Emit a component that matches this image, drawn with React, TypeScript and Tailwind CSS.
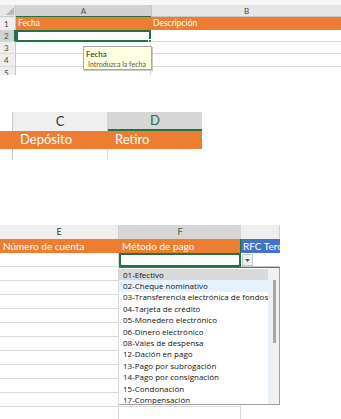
const items = [
  "01-Efectivo",
  "02-Cheque nominativo",
  "03-Transferencia electrónica de fondos",
  "04-Tarjeta de crédito",
  "05-Monedero electrónico",
  "06-Dinero electrónico",
  "08-Vales de despensa",
  "12-Dación en pago",
  "13-Pago por subrogación",
  "14-Pago por consignación",
  "15-Condonación",
  "17-Compensación",
];

function Row1({ n, h, sel }: { n: string; h: string; sel?: boolean }) {
  return (
    <div className={`${h} flex shrink-0`}>
      <div
        className={`w-[16px] shrink-0 flex items-center pl-[4px] text-[8px] border-b border-[#dadada] ${
          sel ? "bg-[#d2d2d2] text-[#217346] border-r-2 border-r-[#217346]" : "bg-[#eeeeee] text-[#444] border-r border-r-[#c8c8c8]"
        }`}
      >
        {n}
      </div>
      {sel ? (
        <div className="w-[135px] shrink-0 border-2 border-[#217346] relative">
          <div className="absolute right-[-3px] bottom-[-3px] w-[4px] h-[4px] bg-[#217346] border border-white" />
        </div>
      ) : (
        <div className="w-[135px] shrink-0 border-b border-r border-[#dadada]" />
      )}
      <div className="flex-1 border-b border-[#dadada]" />
    </div>
  );
}

export default function App() {
  return (
    <div className="w-[341px] h-[419px] bg-white overflow-hidden flex flex-col font-['Lato',sans-serif]">
      {/* Section 1 */}
      <div className="h-[75px] shrink-0 relative flex flex-col overflow-hidden">
        <div className="h-[5px] shrink-0 bg-[#f7f7f7]" />
        <div className="h-[12px] shrink-0 flex text-[8px] text-[#444]">
          <div className="w-[16px] shrink-0 bg-[#e6e6e6] border-r border-b border-[#c8c8c8] relative">
            <svg className="absolute right-[1px] bottom-[1px]" width="8" height="8" viewBox="0 0 8 8">
              <polygon points="8,0 8,8 0,8" fill="#b8b8b8" />
            </svg>
          </div>
          <div className="w-[135px] shrink-0 bg-[#d2d2d2] border-b border-[#217346] flex items-center justify-center text-[#3a5a48]">
            A
          </div>
          <div className="flex-1 bg-[#e6e6e6] border-b border-l border-[#c8c8c8] flex items-center justify-center">B</div>
        </div>
        <div className="h-[13px] shrink-0 flex">
          <div className="w-[16px] shrink-0 bg-[#eeeeee] border-r border-[#c8c8c8] flex items-center pl-[4px] text-[8px] text-[#444]">
            1
          </div>
          <div className="w-[135px] shrink-0 bg-[#ed7d31] text-white text-[8.5px] flex items-center pl-[2px]">Fecha</div>
          <div className="flex-1 bg-[#ed7d31] text-white text-[8.5px] flex items-center pl-[2px]">Descripción</div>
        </div>
        <Row1 n="2" h="h-[12px]" sel />
        <Row1 n="3" h="h-[12px]" />
        <Row1 n="4" h="h-[13px]" />
        <Row1 n="5" h="h-[13px]" />
        <div className="absolute left-[83px] top-[46px] w-[69px] h-[24px] bg-[#ffffe1] border border-[#a8a8a8] shadow-[1px_1px_0_#c8c8c8] flex flex-col pl-[2px] pt-[2px] leading-[10px]">
          <div className="text-[8px] text-[#222]">Fecha</div>
          <div className="text-[7px] text-[#555] pl-[2px]">Introduzca la fecha</div>
        </div>
      </div>

      {/* Section 2 */}
      <div className="h-[48px] mt-[37px] shrink-0 flex flex-col">
        <div className="h-[19px] shrink-0 flex">
          <div className="w-[13px] shrink-0 border-r border-[#c8c8c8]" />
          <div className="w-[95px] shrink-0 bg-[#efefef] border-r border-[#d0d0d0] flex items-center justify-center text-[13px] text-[#333]">
            C
          </div>
          <div className="w-[94px] shrink-0 bg-[#d6d6d6] border-b-2 border-[#217346] flex items-center justify-center text-[13px] text-[#2f6b4a]">
            D
          </div>
        </div>
        <div className="h-[18px] shrink-0 flex">
          <div className="w-[108px] shrink-0 bg-[#ed7d31] text-white text-[13px] flex items-center pl-[20px]">Depósito</div>
          <div className="w-[94px] shrink-0 bg-[#ed7d31] text-white text-[13px] flex items-center pl-[7px]">Retiro</div>
        </div>
        <div className="flex-1 flex">
          <div className="w-[13px] shrink-0 border-r border-[#c8c8c8]" />
          <div className="w-[95px] shrink-0 border-r border-[#dadada]" />
        </div>
      </div>

      {/* Section 3 */}
      <div className="h-[194px] mt-[65px] shrink-0 relative flex flex-col">
        <div className="h-[14px] shrink-0 flex text-[9px]">
          <div className="w-[119px] shrink-0 bg-[#efefef] border-r border-[#d0d0d0] flex items-center justify-center text-[#333]">E</div>
          <div className="w-[122px] shrink-0 bg-[#d6d6d6] flex items-center justify-center text-[#3a5a48]">F</div>
          <div className="w-[39px] shrink-0 bg-[#efefef] border-r border-[#d0d0d0]" />
        </div>
        <div className="h-[14px] shrink-0 flex text-[10px] text-white">
          <div className="w-[119px] shrink-0 bg-[#ed7d31] flex items-center pl-[3px]">Número de cuenta</div>
          <div className="w-[122px] shrink-0 bg-[#ed7d31] border-r border-[#217346] flex items-center pl-[3px]">Método de pago</div>
          <div className="w-[39px] shrink-0 bg-[#4472c4] flex items-center pl-[2px] overflow-hidden whitespace-nowrap">RFC Tercero</div>
        </div>
        <div className="h-[14px] shrink-0 flex">
          <div className="w-[119px] shrink-0 border-b border-r border-[#dadada]" />
          <div className="w-[122px] shrink-0 border-2 border-[#217346]" />
          <div className="w-[39px] shrink-0 border-b border-[#c8c8c8] relative">
            <div className="absolute left-[1px] top-[1px] w-[11px] h-[12px] bg-[#f0f0f0] border border-[#c8c8c8] flex items-center justify-center">
              <svg width="5" height="3" viewBox="0 0 5 3">
                <polygon points="0,0 5,0 2.5,3" fill="#555" />
              </svg>
            </div>
          </div>
        </div>
        {Array.from({ length: 11 }).map((_, i) => (
          <div key={i} className="h-[14px] shrink-0 flex">
            <div className="w-[119px] shrink-0 border-b border-r border-[#dadada]" />
            <div className="w-[122px] shrink-0 border-b border-r border-[#dadada]" />
          </div>
        ))}

        {/* dropdown */}
        <div className="absolute left-[119px] top-[42px] w-[161px] h-[138px] bg-white border-t border-t-[#6a6a6a] border-r border-b border-[#a0a0a0] flex font-['Open_Sans',sans-serif]">
          <div className="flex-1 flex flex-col pt-[1px] overflow-hidden">
            {items.map((t, i) => (
              <div
                key={t}
                className={`h-[11.4px] shrink-0 flex items-center pl-[4px] text-[8px] text-[#111] whitespace-nowrap ${
                  i === 0 ? "bg-[#d9d9d9]" : i === 1 ? "bg-[#e5f1fb]" : ""
                }`}
              >
                {t}
              </div>
            ))}
          </div>
          <div className="w-[11px] shrink-0 bg-[#f0f0f0] border-l border-[#e5f1fb] relative">
            <div className="absolute left-[4px] top-[12px] w-[3px] h-[63px] bg-[#a6a6a6]" />
          </div>
        </div>
      </div>
    </div>
  );
}
